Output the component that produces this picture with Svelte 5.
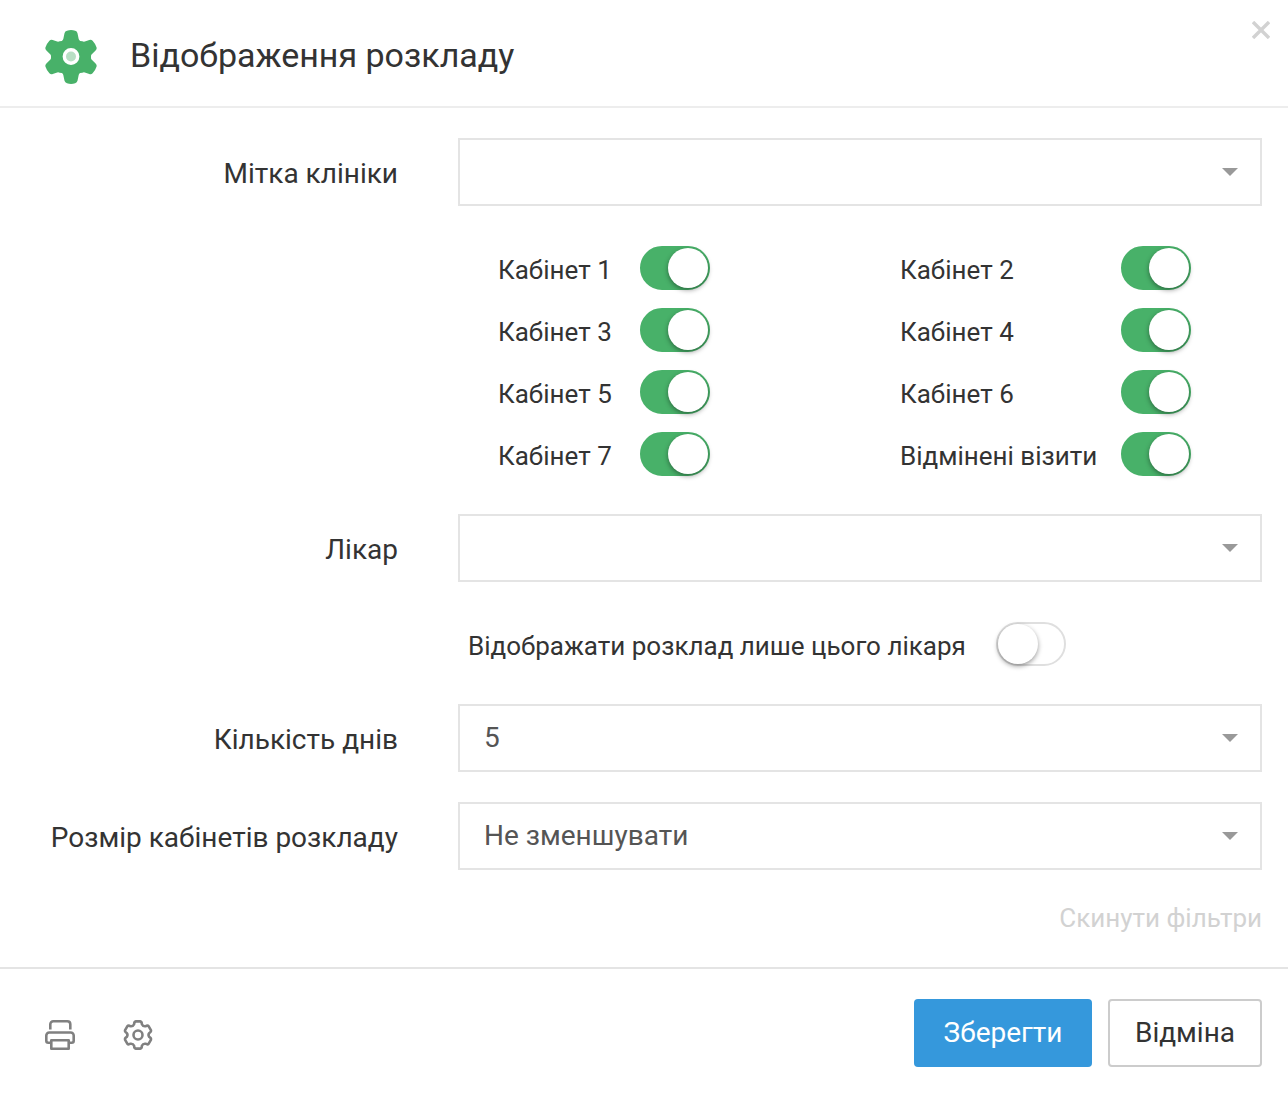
<script lang="ts">
  interface Toggle {
    id: string;
    label: string;
    on: boolean;
  }

  let rooms: Toggle[][] = $state([
    [
      { id: "room-1", label: "Кабінет 1", on: true },
      { id: "room-3", label: "Кабінет 3", on: true },
      { id: "room-5", label: "Кабінет 5", on: true },
      { id: "room-7", label: "Кабінет 7", on: true },
    ],
    [
      { id: "room-2", label: "Кабінет 2", on: true },
      { id: "room-4", label: "Кабінет 4", on: true },
      { id: "room-6", label: "Кабінет 6", on: true },
      { id: "cancelled", label: "Відмінені візити", on: true },
    ],
  ]);

  let clinicTag = $state("");
  let doctor = $state("");
  let onlyDoctor = $state(false);
  let days = $state("5");
  let roomSize = $state("Не зменшувати");

  // Point on a 30x30 icon, angle in degrees clockwise from the top.
  function polar(angle: number, radius: number) {
    const rad = (angle * Math.PI) / 180;
    return `${(15 + radius * Math.sin(rad)).toFixed(2)} ${(15 - radius * Math.cos(rad)).toFixed(2)}`;
  }

  const teeth = [0, 60, 120, 180, 240, 300].map((a) =>
    [
      `${a ? "L" : "M"}${polar(a - 20, 11.4)}`,
      `Q${polar(a - 16, 13.9)} ${polar(a - 9, 13.8)}`,
      `L${polar(a + 9, 13.8)}`,
      `Q${polar(a + 16, 13.9)} ${polar(a + 20, 11.4)}`,
      `Q${polar(a + 30, 9.8)} ${polar(a + 40, 11.4)}`,
    ].join(""),
  );
  const gearPath = teeth.join("") + "Z";
</script>

{#snippet caret()}
  <svg class="caret" width="16" height="8" viewBox="0 0 16 8" aria-hidden="true">
    <path d="M0 0h16L8 8z" fill="#999" />
  </svg>
{/snippet}

<form class="dialog" aria-labelledby="dialog-title">
  <header>
    <svg class="logo" width="52" height="54" viewBox="0 0 52 54" aria-hidden="true">
      <path
        fill="#48b169"
        d="M22 0.8Q26 -0.6 30.2 0.8Q32 1.3 32.5 3.2L33.7 9Q34 10.2 35.2 10.9L37.3 11.3Q38.6 12 39.8 11.6L44.3 10Q46.2 9.3 47.6 10.8Q50.4 13.8 51.6 17.6Q52.1 19.2 50.6 20.6L46.8 24.2Q46 25 46 26V28Q46 29 46.8 29.8L50.6 33.4Q52.1 34.8 51.6 36.4Q50.4 40.2 47.6 43.2Q46.2 44.7 44.3 44L39.8 42.4Q38.6 42 37.3 42.7L35.2 43.1Q34 43.8 33.7 45L32.5 50.8Q32 52.7 30.2 53.2Q26 54.6 22 53.2Q20 52.7 19.5 50.8L18.3 45Q18 43.8 16.8 43.1L14.7 42.7Q13.4 42 12.2 42.4L7.7 44Q5.8 44.7 4.4 43.2Q1.6 40.2 0.4 36.4Q-0.1 34.8 1.4 33.4L5.2 29.8Q6 29 6 28V26Q6 25 5.2 24.2L1.4 20.6Q-0.1 19.2 0.4 17.6Q1.6 13.8 4.4 10.8Q5.8 9.3 7.7 10L12.2 11.6Q13.4 12 14.7 11.3L16.8 10.9Q18 10.2 18.3 9L19.5 3.2Q20 1.3 22 0.8Z"
      />
      <circle cx="26" cy="26.5" r="6.700" fill="#b8dfc4" stroke="#fff" stroke-width="3.400" />
    </svg>
    <h1 id="dialog-title">Відображення розкладу</h1>
    <button type="button" class="close" aria-label="Закрити">
      <svg width="18" height="18" viewBox="0 0 18 18" aria-hidden="true">
        <path d="M1 1l16 16M17 1L1 17" stroke="#d2d2d2" stroke-width="3.400" />
      </svg>
    </button>
  </header>

  <div class="body">
    <div class="row">
      <label for="clinic-tag">Мітка клініки</label>
      <div class="field">
        <select id="clinic-tag" bind:value={clinicTag}>
          <option value=""></option>
        </select>
        {@render caret()}
      </div>
    </div>

    <div class="rooms">
      {#each rooms as column}
        <div class="room-column">
          {#each column as room (room.id)}
            <div class="toggle-row">
              <label for={room.id}>{room.label}</label>
              <input id={room.id} class="switch" type="checkbox" bind:checked={room.on} />
            </div>
          {/each}
        </div>
      {/each}
    </div>

    <div class="row">
      <label for="doctor">Лікар</label>
      <div class="field">
        <select id="doctor" bind:value={doctor}>
          <option value=""></option>
        </select>
        {@render caret()}
      </div>
    </div>

    <div class="toggle-row only-doctor">
      <label for="only-doctor">Відображати розклад лише цього лікаря</label>
      <input id="only-doctor" class="switch" type="checkbox" bind:checked={onlyDoctor} />
    </div>

    <div class="row">
      <label for="days">Кількість днів</label>
      <div class="field">
        <select id="days" bind:value={days}>
          <option>5</option>
        </select>
        {@render caret()}
      </div>
    </div>

    <div class="row spaced">
      <label for="room-size">Розмір кабінетів розкладу</label>
      <div class="field">
        <select id="room-size" bind:value={roomSize}>
          <option>Не зменшувати</option>
        </select>
        {@render caret()}
      </div>
    </div>

    <button type="button" class="reset">Скинути фільтри</button>
  </div>

  <footer>
    <div class="tools">
      <button type="button" class="icon" aria-label="Друк">
        <svg width="30" height="30" viewBox="0 0 30 30" aria-hidden="true">
          <g fill="none" stroke="#808080" stroke-width="2.6" stroke-linejoin="round">
            <path d="M5.3 9.500V4.300a3 3 0 0 1 3-3h14q3 0 3 3V9.500" />
            <path d="M6 22.700H3.300a2 2 0 0 1-2-2V15.500a3 3 0 0 1 3-3h21.400a3 3 0 0 1 3 3v5.200a2 2 0 0 1-2 2H24" />
            <path d="M6.300 20.300h17.400v8.400H6.300z" />
          </g>
        </svg>
      </button>
      <button type="button" class="icon" aria-label="Налаштування">
        <svg width="30" height="30" viewBox="0 0 30 30" aria-hidden="true">
          <g fill="none" stroke="#808080" stroke-width="2.6" stroke-linejoin="round">
            <path d={gearPath} />
            <circle cx="15" cy="15" r="4.500" />
          </g>
        </svg>
      </button>
    </div>
    <div class="actions">
      <button type="submit" class="save">Зберегти</button>
      <button type="button" class="cancel">Відміна</button>
    </div>
  </footer>
</form>

<style>
  .dialog {
    --text: #333;
    --line: #e4e4e4;
    --green: #48b169;
    background: #fff;
    color: var(--text);
    font-family: Roboto, "Noto Sans", sans-serif;
    font-size: 28px;
    line-height: 34px;
  }

  button {
    margin: 0;
    padding: 0;
    border: 0;
    background: none;
    color: inherit;
    font: inherit;
    cursor: pointer;
  }

  svg {
    display: block;
  }

  header {
    display: flex;
    align-items: flex-start;
    padding: 21px 18px 17px 45px;
    border-bottom: 2px solid #ededed;
  }

  .logo {
    flex: none;
    margin-top: 9px;
    overflow: visible;
  }

  h1 {
    flex: 1;
    margin: 0 0 0 33px;
    font-size: 34px;
    font-weight: 400;
    line-height: 68px;
  }

  .body {
    display: flex;
    flex-direction: column;
    padding: 30px 26px 32px 0;
  }

  .row {
    display: grid;
    grid-template-columns: 398px 1fr;
    column-gap: 60px;
    align-items: center;
  }

  .row > label {
    padding-top: 4px;
    text-align: right;
  }

  .spaced {
    margin-top: 30px;
  }

  .field {
    position: relative;
  }

  select {
    display: block;
    width: 100%;
    height: 68px;
    padding: 0 60px 0 24px;
    border: 2px solid var(--line);
    border-radius: 0;
    background: #fff;
    color: #555;
    font: inherit;
    appearance: none;
  }

  .caret {
    position: absolute;
    top: 30px;
    right: 24px;
    pointer-events: none;
  }

  .rooms {
    display: grid;
    grid-template-columns: 1fr 1fr;
    margin: 40px 0 38px 458px;
  }

  .room-column {
    display: grid;
    grid-template-columns: 142px 70px;
    row-gap: 18px;
    padding-left: 40px;
  }

  .room-column:last-child {
    grid-template-columns: 221px 70px;
  }

  .room-column .toggle-row {
    display: grid;
    grid-column: span 2;
    grid-template-columns: subgrid;
  }

  .toggle-row {
    display: flex;
    align-items: center;
    font-size: 26px;
    white-space: nowrap;
  }

  .toggle-row label {
    padding-top: 4px;
  }

  .only-doctor {
    gap: 30px;
    margin: 40px 0 38px 468px;
  }

  .switch {
    flex: none;
    display: block;
    width: 70px;
    height: 44px;
    margin: 0;
    border: 2px solid #dfdfdf;
    border-radius: 22px;
    background: #fff;
    appearance: none;
    cursor: pointer;
  }

  .switch::before {
    content: "";
    display: block;
    width: 40px;
    height: 40px;
    border-radius: 50%;
    background: #fff;
    box-shadow: 0 2px 5px rgba(0, 0, 0, 0.4);
  }

  .switch:checked {
    border-color: var(--green);
    background: var(--green);
  }

  .switch:checked::before {
    margin-left: 26px;
  }

  .reset {
    align-self: flex-end;
    margin-top: 31px;
    color: #d2d2d2;
    font-size: 26px;
  }

  footer {
    display: flex;
    align-items: center;
    justify-content: space-between;
    padding: 30px 26px 27px 45px;
    border-top: 2px solid var(--line);
  }

  .tools {
    display: flex;
    gap: 48px;
    padding-top: 4px;
  }

  .icon svg {
    overflow: visible;
  }

  .actions {
    display: flex;
    gap: 16px;
  }

  .save,
  .cancel {
    height: 68px;
    border-radius: 4px;
  }

  .save {
    min-width: 178px;
    background: #3598dc;
    color: #fff;
  }

  .cancel {
    min-width: 154px;
    border: 2px solid #ccc;
  }
</style>
